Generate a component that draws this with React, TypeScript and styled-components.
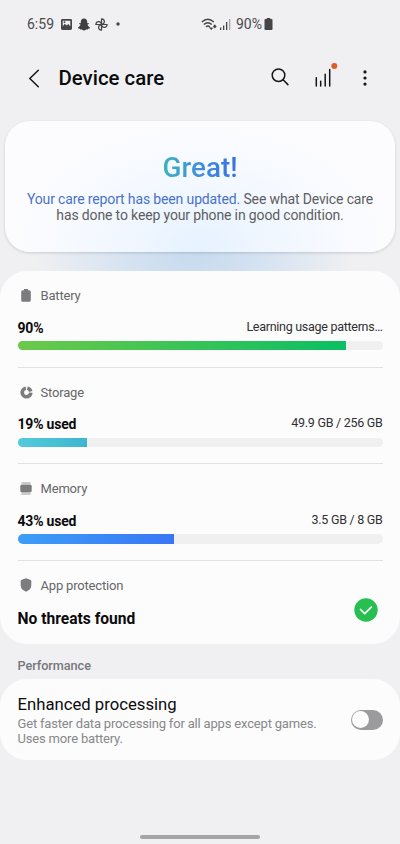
import React, { useState } from 'react';
import styled, { createGlobalStyle } from 'styled-components';

const GlobalStyle = createGlobalStyle`
  * { box-sizing: border-box; }
  body { margin: 0; background: #f0f0f2; }
  button { border: 0; padding: 0; background: none; font: inherit; color: inherit; }
  svg { display: block; }
`;

const Screen = styled.div`
  width: 400px;
  height: 844px;
  display: flex;
  flex-direction: column;
  overflow: hidden;
  background: #f0f0f2;
  font-family: Roboto, sans-serif;
  color: #0b0b0c;
`;

const StatusBar = styled.header`
  height: 48px;
  display: grid;
  grid-template-columns: 174px 1fr;
  padding-left: 27px;
  color: #4a4a4c;
  font-size: 14px;
  line-height: 48px;
`;

const StatusGroup = styled.div`
  display: flex;
  align-items: center;
`;

const StatusText = styled.span<{ $gap?: number }>`
  margin-left: ${(p) => p.$gap ?? 0}px;
`;

const StatusIcon = styled.svg<{ $gap: number }>`
  flex: none;
  margin-left: ${(p) => p.$gap}px;
`;

const AppBar = styled.nav`
  height: 60px;
  display: flex;
  align-items: center;
  padding: 0 24px 0 23px;
`;

const IconButton = styled.button<{ $width: number; $align?: string }>`
  width: ${(p) => p.$width}px;
  height: 40px;
  display: grid;
  align-items: center;
  justify-content: ${(p) => p.$align ?? 'center'};
`;

const ReportIcon = styled.svg`
  margin-bottom: 5px;
`;

const SearchIcon = styled.svg`
  margin-bottom: 2px;
`;

const Title = styled.h1`
  flex: 1;
  margin: 0 0 0 13.5px;
  font-size: 20.4px;
  font-weight: 500;
  line-height: 24px;
`;

const HeroArea = styled.section`
  height: 163px;
  padding: 12.5px 5px 0;
  background: radial-gradient(ellipse 160px 110px at 195px 145px, #c6daef 0%, #d4e2f1 40%, rgba(240, 240, 242, 0) 100%);
`;

const HeroCard = styled.div`
  height: 131px;
  padding: 30.5px 0 0;
  border-radius: 25px;
  text-align: center;
  background: radial-gradient(ellipse 190px 125px at 50% 96%, #e6f2ff 0%, #f3f8ff 50%, #fcfcfe 100%);
  box-shadow: 0 1px 3px rgba(50, 60, 80, 0.2);
`;

const HeroTitle = styled.h2`
  display: inline-block;
  margin: 0;
  font-size: 27.8px;
  font-weight: 500;
  line-height: 34px;
  color: transparent;
  background: linear-gradient(90deg, #3bb3be, #3e91da 45%, #3a6fe6);
  background-clip: text;
`;

const HeroText = styled.p`
  margin: 5.5px 0 0;
  color: #5d5e62;
  font-size: 14px;
  line-height: 16px;
  letter-spacing: -0.14px;
  white-space: nowrap;
`;

const Highlight = styled.span`
  color: #4a72cb;
`;

const Card = styled.section<{ $height: number }>`
  flex: none;
  height: ${(p) => p.$height}px;
  padding: 0 17.5px;
  border-radius: 27px;
  background: #fcfcfc;
`;

const Metric = styled.article`
  height: 96.6px;
  padding-top: 15.6px;
  border-bottom: 1px solid #e2e2e3;
`;

const Protection = styled.article`
  padding-top: 15.4px;
`;

const MetricLabel = styled.div`
  height: 18px;
  display: grid;
  grid-template-columns: 17px 1fr;
  align-items: center;
  gap: 6px;
  color: #66676a;
  font-size: 13px;
  letter-spacing: -0.18px;
`;

const LabelIcon = styled.svg`
  justify-self: center;
  color: #7c7c7e;
`;

const MetricValues = styled.div`
  height: 20px;
  margin-top: 13px;
  display: flex;
  justify-content: space-between;
  line-height: 20px;
`;

const Used = styled.strong`
  font-size: 14px;
  font-weight: 700;
  letter-spacing: -0.2px;
`;

const Detail = styled.span`
  margin-top: -1px;
  font-size: 12.5px;
  letter-spacing: -0.28px;
  color: #303032;
`;

const Track = styled.div`
  height: 9.5px;
  margin-top: 3.4px;
  overflow: hidden;
  border-radius: 5px;
  background: #f0f0f1;
`;

const Fill = styled.div<{ $from: string; $to: string }>`
  height: 100%;
  background: linear-gradient(90deg, ${(p) => p.$from}, ${(p) => p.$to});
`;

const ProtectionRow = styled.div`
  display: flex;
  justify-content: space-between;
  padding: 4px 5px 0 0;
`;

const ProtectionText = styled.strong`
  margin-top: 10.5px;
  font-size: 15.6px;
  font-weight: 700;
  line-height: 20px;
`;

const GroupTitle = styled.h3`
  margin: 0;
  height: 35px;
  padding: 4px 17.5px 0;
  color: #77787b;
  font-size: 12.7px;
  font-weight: 500;
  line-height: 36px;
  letter-spacing: -0.05px;
`;

const SettingRow = styled.div`
  height: 100%;
  display: flex;
  align-items: center;
  justify-content: space-between;
`;

const SettingTitle = styled.div`
  padding-top: 1px;
  font-size: 16.7px;
  line-height: 20px;
`;

const SettingNote = styled.p`
  margin: 1px 0 0;
  color: #87888a;
  font-size: 13px;
  line-height: 15px;
  letter-spacing: -0.18px;
`;

const Switch = styled.button<{ $on: boolean }>`
  width: 32px;
  height: 20px;
  display: flex;
  align-items: center;
  justify-content: ${(p) => (p.$on ? 'flex-end' : 'flex-start')};
  padding: 0 1.5px;
  border-radius: 10px;
  background: ${(p) => (p.$on ? '#387aff' : '#9b9b9d')};
`;

const Knob = styled.span`
  width: 17px;
  height: 17px;
  border-radius: 50%;
  background: #fcfcfc;
`;

const GestureArea = styled.footer`
  flex: 1;
  display: flex;
  align-items: flex-end;
  justify-content: center;
  padding-bottom: 5px;
`;

const GestureHandle = styled.div`
  width: 120px;
  height: 4px;
  border-radius: 2px;
  background: #a5a5a7;
`;

const BatteryGlyph = () => (
  <LabelIcon width="10" height="13" viewBox="0 0 10 13" fill="currentColor">
    <path d="M3 0h4v1.2h1.2Q9.8 1.2 9.8 2.8v8.4q0 1.6-1.6 1.6H1.8Q.2 12.8.2 11.2V2.8q0-1.6 1.6-1.6H3z" />
  </LabelIcon>
);

const StorageGlyph = () => (
  <LabelIcon width="13" height="13" viewBox="0 0 13 13" fill="none" stroke="currentColor" strokeWidth="3.6">
    <path d="M7.3 2.3A4.3 4.3 0 0 1 10.7 5.5" />
    <path d="M10.8 6.7A4.3 4.3 0 1 1 5.9 2.25" />
  </LabelIcon>
);

const MemoryGlyph = () => (
  <LabelIcon width="12" height="13" viewBox="0 0 12 13" fill="currentColor">
    <path d="M1.4 0h9.2v2H1.4zM1.4 11h9.2v2H1.4z" opacity=".38" />
    <rect x="0.3" y="2.6" width="11.4" height="7.8" rx="1.7" />
  </LabelIcon>
);

const ShieldGlyph = () => (
  <LabelIcon width="12" height="14" viewBox="0 0 12 14" fill="currentColor">
    <path d="M6 .3 10.2 1.7Q11.3 2.1 11.3 3.2v4.2c0 3-2.1 4.8-5.3 6.3C2.8 12.2.7 10.4.7 7.4V3.2Q.7 2.1 1.8 1.7z" />
  </LabelIcon>
);

const metrics = [
  { name: 'Battery', icon: <BatteryGlyph />, used: '90%', detail: 'Learning usage patterns…', level: 90, from: '#6bc94a', to: '#0abf64' },
  { name: 'Storage', icon: <StorageGlyph />, used: '19% used', detail: '49.9 GB / 256 GB', level: 19, from: '#54cbd9', to: '#3eb6d2' },
  { name: 'Memory', icon: <MemoryGlyph />, used: '43% used', detail: '3.5 GB / 8 GB', level: 43, from: '#3d9df8', to: '#3976f6' },
];

export default function App() {
  const [enhanced, setEnhanced] = useState(false);
  return (
    <Screen>
      <GlobalStyle />
      <StatusBar>
        <StatusGroup>
          <StatusText>6:59</StatusText>
          <StatusIcon $gap={7} width="11" height="11" viewBox="0 0 11 11">
            <path fill="#454547" fillRule="evenodd" d="M1.4 0h8.2Q11 0 11 1.4v8.2Q11 11 9.6 11H1.4Q0 11 0 9.6V1.4Q0 0 1.4 0zM1.7 1.8v5.4l2.1-2.4 1.8 1.7 1.6-1.4 2.1 2.1V1.8z" />
            <circle cx="3.5" cy="3.2" r="0.9" fill="#454547" />
          </StatusIcon>
          <StatusIcon $gap={6} width="12" height="13" viewBox="0 0 12 13" fill="#3f3f41">
            <path d="M6 .4C8 .4 9.2 1.8 9.2 3.7v1.5l1.4-.2.3.8-1.4.9c.4 1.2 1.2 2 2.4 2.5l-.2 1.2-1.6.3-.3.9-1.7-.1C7.3 12.2 6.7 12.6 6 12.6s-1.3-.4-2.1-1.1l-1.7.1-.3-.9-1.6-.3-.2-1.2c1.2-.5 2-1.3 2.4-2.5L1.1 5.8l.3-.8 1.4.2V3.7C2.8 1.8 4 .4 6 .4z" />
          </StatusIcon>
          <StatusIcon $gap={5} width="13" height="13" viewBox="0 0 13 13" fill="none" stroke="#454547" strokeWidth="1.2" strokeLinejoin="round">
            <path d="M6.5 6.5V.8Q9.4 1.1 9.4 3.6T6.5 6.5h5.7Q11.9 9.4 9.4 9.4T6.5 6.5v5.7Q3.6 11.9 3.6 9.4T6.5 6.5H.8Q1.1 3.6 3.6 3.6T6.5 6.5" />
          </StatusIcon>
          <StatusIcon $gap={8} width="4" height="4" viewBox="0 0 4 4"><circle cx="2" cy="2" r="1.7" fill="#454547" /></StatusIcon>
        </StatusGroup>
        <StatusGroup>
          <StatusIcon $gap={0} width="16" height="13" viewBox="0 0 16 13" fill="none" stroke="#454547" strokeWidth="1.3">
            <path d="M.8 4Q6.8-1.6 12.8 4M2.8 6.6q4-3.7 8 0M4.900 9q2-1.900 4 0" />
            <path d="M7.800 9.300 10.200 12l2.200-2.200zM12 8.500 13.700 6.300 15.700 8.500 13.700 10.400z" fill="#454547" stroke="none" />
          </StatusIcon>
          <StatusIcon $gap={3} width="11" height="11" viewBox="0 0 11 11" fill="#454547">
            <path d="M0 8.500h1.300V11H0zM3 6.500h1.300V11H3zM6 3h1.300v8H6z" /><path d="M9 0h1.300v11H9z" opacity=".45" />
          </StatusIcon>
          <StatusText $gap={5}>90%</StatusText>
          <StatusIcon $gap={1.5} width="9" height="12" viewBox="0 0 8 12" fill="#454547">
            <path d="M2.200 0h3.600v1H7q1 0 1 1v9q0 1-1 1H1q-1 0-1-1V2q0-1 1-1h1.200z" />
          </StatusIcon>
        </StatusGroup>
      </StatusBar>

      <AppBar>
        <IconButton $width={22} aria-label="Back">
          <svg width="12" height="19" viewBox="0 0 12 19" fill="none" stroke="#151516" strokeWidth="1.5" strokeLinecap="round" strokeLinejoin="round"><path d="M10.300 1.300 1.800 9.500l8.500 8.200" /></svg>
        </IconButton>
        <Title>Device care</Title>
        <IconButton $width={43} $align="start" aria-label="Search">
          <SearchIcon width="18" height="18" viewBox="0 0 18 18" fill="none" stroke="#151516" strokeWidth="1.5" strokeLinecap="round"><circle cx="7.500" cy="7.200" r="6.300" /><path d="m12.100 11.800 4.800 4.800" /></SearchIcon>
        </IconButton>
        <IconButton $width={39} $align="start" aria-label="Care report">
          <ReportIcon width="24" height="26" viewBox="0 0 24 26" fill="none" stroke="#151516" strokeWidth="1.5" strokeLinecap="round"><path d="M2.300 14.700V23M6.700 18.200V23M11.200 11.200V23M15.700 6.500V23" /><circle cx="20.300" cy="3.100" r="3" fill="#df5d23" stroke="none" /></ReportIcon>
        </IconButton>
        <IconButton $width={23} aria-label="More options">
          <svg width="4" height="17" viewBox="0 0 4 17" fill="#151516"><circle cx="2" cy="1.900" r="1.600" /><circle cx="2" cy="8" r="1.600" /><circle cx="2" cy="14.100" r="1.600" /></svg>
        </IconButton>
      </AppBar>

      <HeroArea>
        <HeroCard>
          <HeroTitle>Great!</HeroTitle>
          <HeroText>
            <Highlight>Your care report has been updated.</Highlight> See what Device care<br />
            has done to keep your phone in good condition.
          </HeroText>
        </HeroCard>
      </HeroArea>

      <Card $height={373}>
        {metrics.map((m) => (
          <Metric key={m.name}>
            <MetricLabel>{m.icon}<span>{m.name}</span></MetricLabel>
            <MetricValues><Used>{m.used}</Used><Detail>{m.detail}</Detail></MetricValues>
            <Track><Fill $from={m.from} $to={m.to} style={{ width: `${m.level}%` }} /></Track>
          </Metric>
        ))}
        <Protection>
          <MetricLabel><ShieldGlyph /><span>App protection</span></MetricLabel>
          <ProtectionRow>
            <ProtectionText>No threats found</ProtectionText>
            <svg width="24" height="24" viewBox="0 0 24 24" fill="none"><circle cx="12" cy="12" r="11.700" fill="#28bf51" /><path d="m6.500 11.500 4.200 4.100 6.600-6.500" stroke="#fcfcfc" strokeWidth="1.700" strokeLinecap="round" strokeLinejoin="round" /></svg>
          </ProtectionRow>
        </Protection>
      </Card>

      <GroupTitle>Performance</GroupTitle>
      <Card $height={81}>
        <SettingRow>
          <div>
            <SettingTitle>Enhanced processing</SettingTitle>
            <SettingNote>Get faster data processing for all apps except games.<br />Uses more battery.</SettingNote>
          </div>
          <Switch $on={enhanced} role="switch" aria-checked={enhanced} aria-label="Enhanced processing" onClick={() => setEnhanced(!enhanced)}><Knob /></Switch>
        </SettingRow>
      </Card>

      <GestureArea><GestureHandle /></GestureArea>
    </Screen>
  );
}
